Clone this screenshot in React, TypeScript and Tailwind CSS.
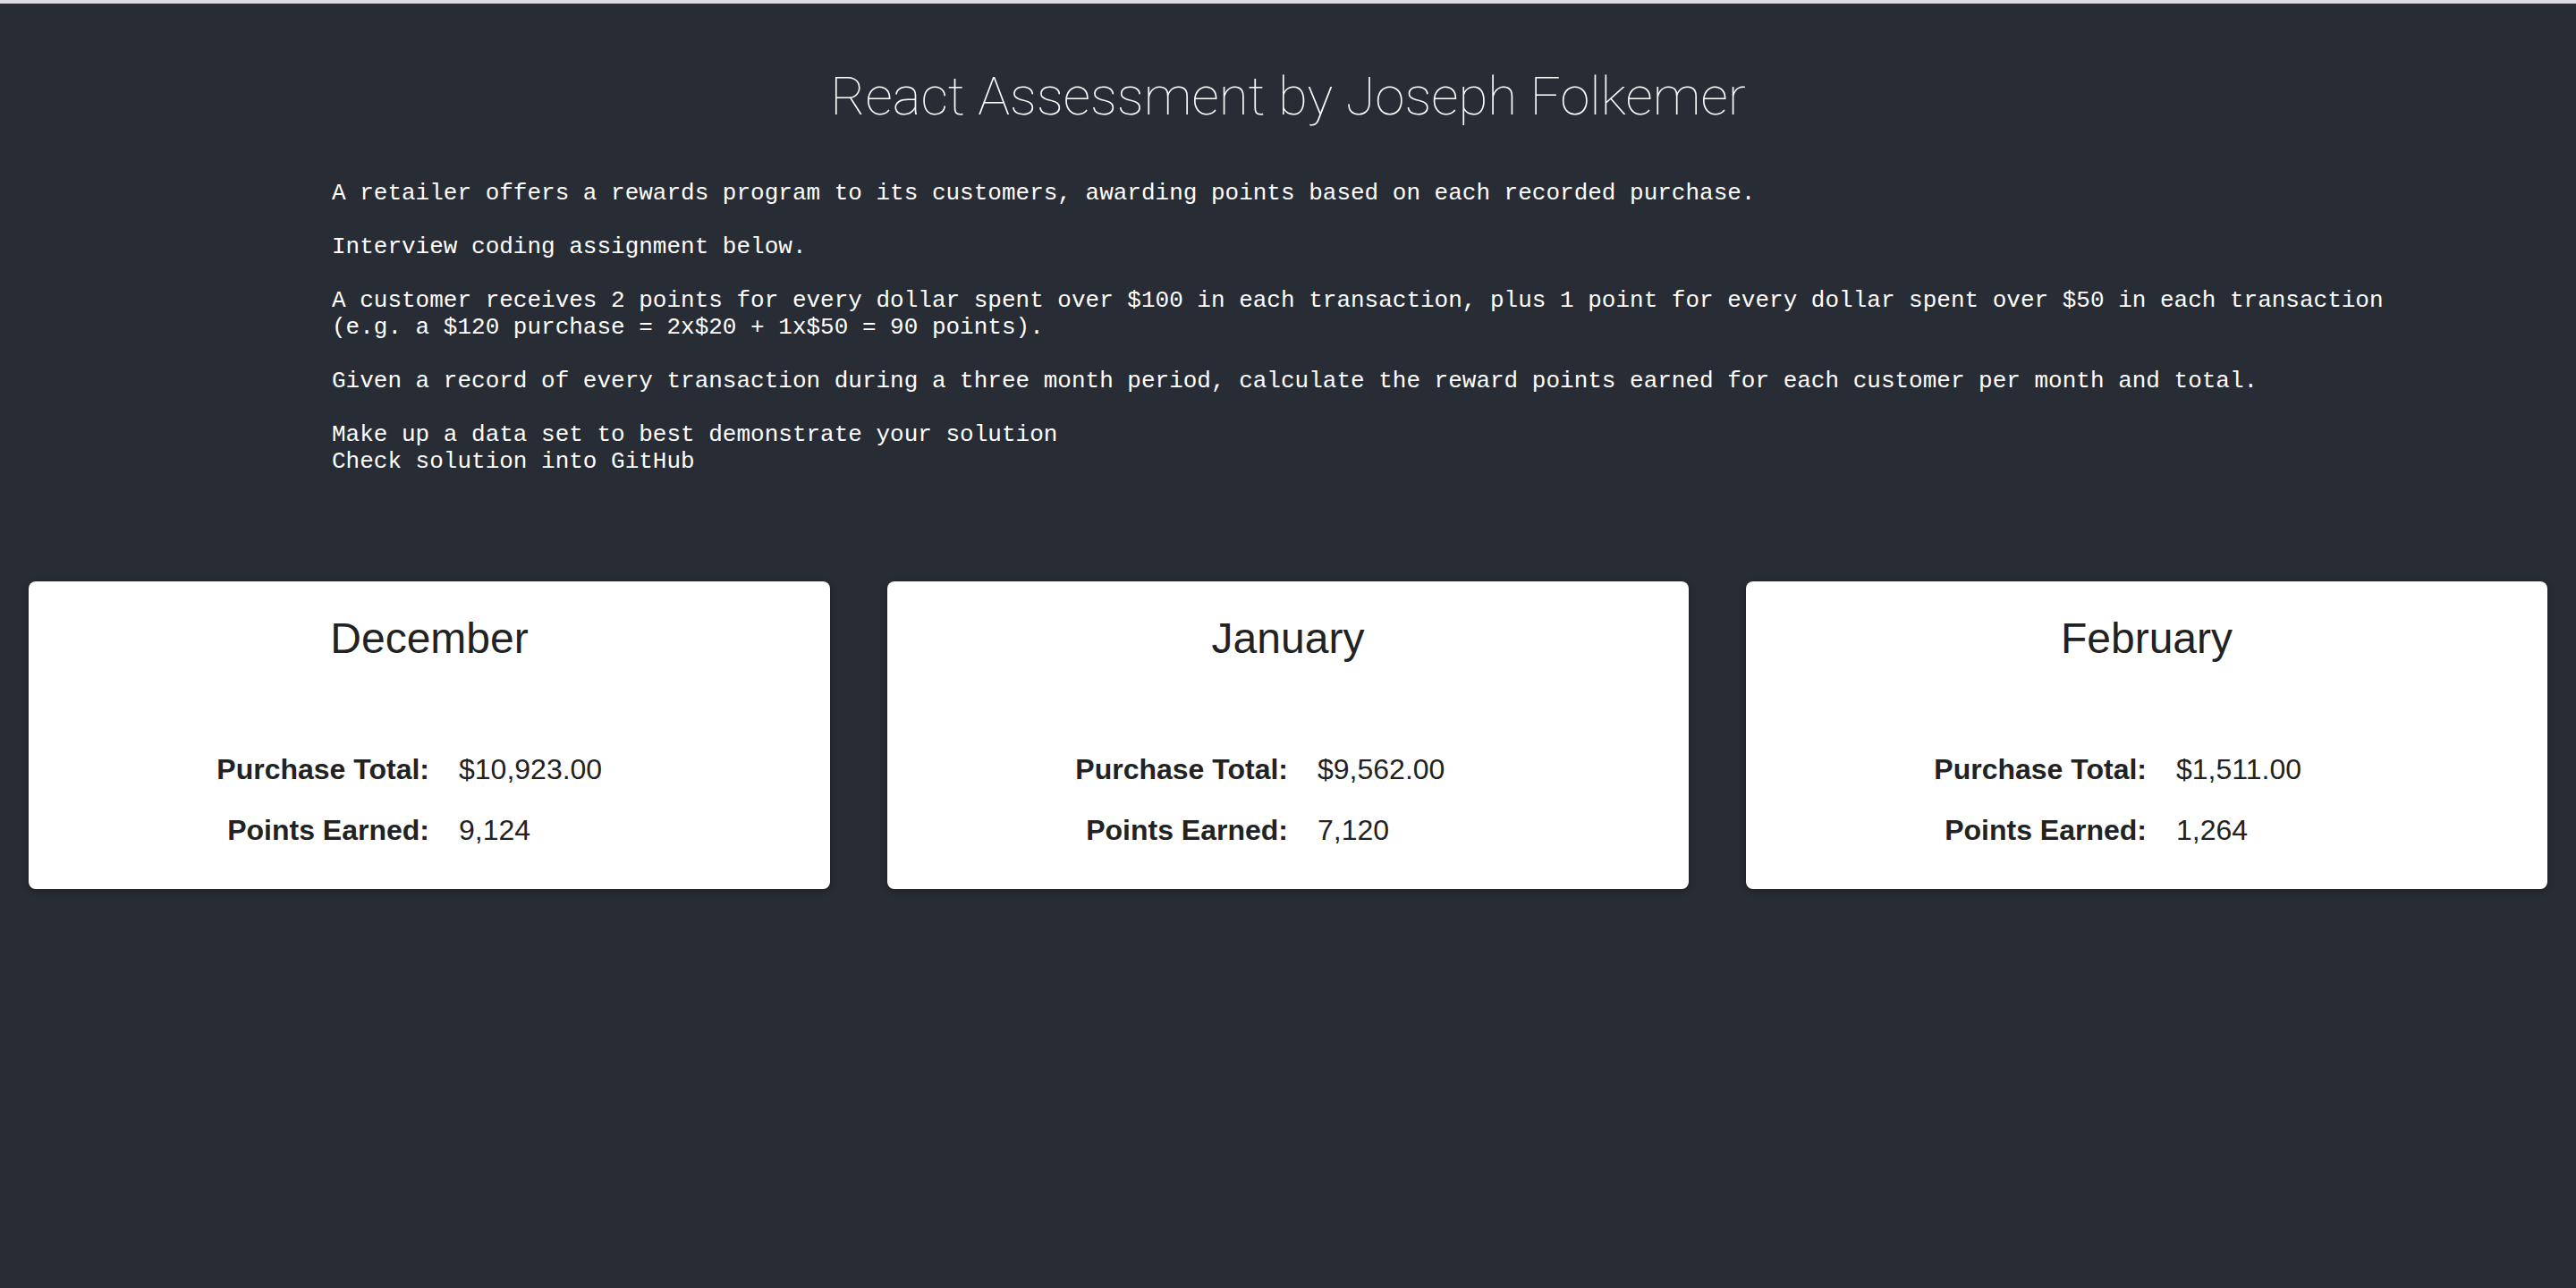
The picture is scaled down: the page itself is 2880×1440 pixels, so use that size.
const months = [
  { name: 'December', total: '$10,923.00', points: '9,124' },
  { name: 'January', total: '$9,562.00', points: '7,120' },
  { name: 'February', total: '$1,511.00', points: '1,264' },
];

function MonthCard({ name, total, points }: { name: string; total: string; points: string }) {
  return (
    <div className="rounded-[8px] bg-white pt-[36px] pb-[46px] text-[#222] shadow-[0_2px_6px_rgba(0,0,0,0.35)]">
      <h2 className="text-center text-[48px] leading-[56px] font-normal">{name}</h2>
      <div className="mt-[98px] flex flex-col gap-[28px] text-[32px] leading-[40px]">
        <div className="flex">
          <span className="w-1/2 text-right font-bold">Purchase Total:</span>
          <span className="w-1/2 pl-[33px]">{total}</span>
        </div>
        <div className="flex">
          <span className="w-1/2 text-right font-bold">Points Earned:</span>
          <span className="w-1/2 pl-[33px]">{points}</span>
        </div>
      </div>
    </div>
  );
}

export default function App() {
  return (
    <div className="min-h-[1440px] bg-[#282c34] font-['Liberation_Sans',Arial,sans-serif]">
      <div className="h-[4px] bg-[#dcdde0]" />
      <h1 className="pt-[66px] text-center font-['Roboto',sans-serif] text-[60px] leading-[76px] font-thin text-white">
        React Assessment by Joseph Folkemer
      </h1>

      <div className="mt-[55px] pl-[371px] font-['Liberation_Mono','Courier_New',monospace] text-[26px] leading-[30px] whitespace-pre text-white">
        <p>A retailer offers a rewards program to its customers, awarding points based on each recorded purchase.</p>
        <p className="mt-[30px]">Interview coding assignment below.</p>
        <p className="mt-[30px]">
          A customer receives 2 points for every dollar spent over $100 in each transaction, plus 1 point for every dollar spent over $50 in each transaction
          <br />
          (e.g. a $120 purchase = 2x$20 + 1x$50 = 90 points).
        </p>
        <p className="mt-[30px]">
          Given a record of every transaction during a three month period, calculate the reward points earned for each customer per month and total.
        </p>
        <p className="mt-[30px]">
          Make up a data set to best demonstrate your solution
          <br />
          Check solution into GitHub
        </p>
      </div>

      <div className="mt-[119px] grid grid-cols-3 gap-[64px] px-[32px]">
        {months.map((m) => (
          <MonthCard key={m.name} {...m} />
        ))}
      </div>
    </div>
  );
}
